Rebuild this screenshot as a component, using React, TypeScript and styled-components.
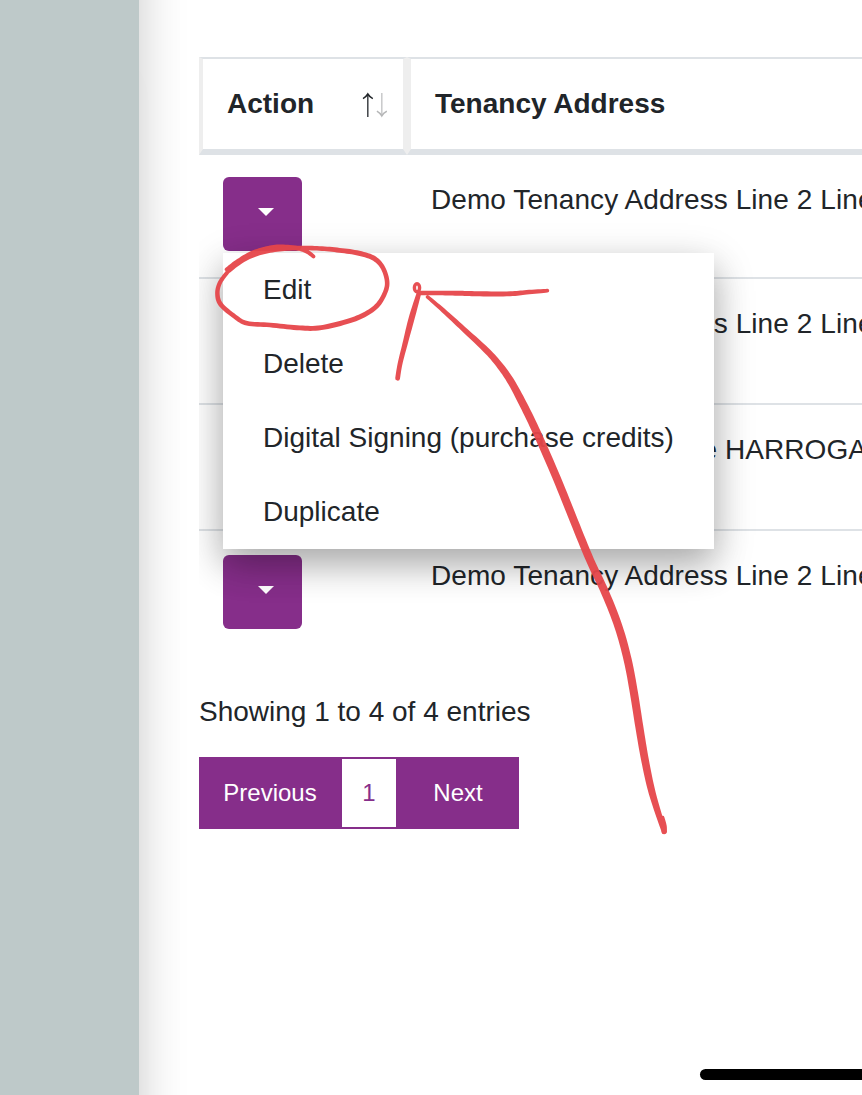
import React from 'react';
import styled, { createGlobalStyle } from 'styled-components';

const purple = '#862e8a';
const line = '#dee2e6';

const GlobalStyle = createGlobalStyle`
  * { box-sizing: border-box; }
  html, body { margin: 0; overflow: hidden; }
  body {
    background: #fff;
    color: #212529;
    font: 28px/42px "Liberation Sans", Arial, sans-serif;
  }
`;

const Page = styled.div`
  position: relative;
  display: flex;
  width: 100%;
  height: 1095px;
  overflow: hidden;
`;

const Sidebar = styled.aside`
  flex: 0 0 139px;
  background: #bec9c9;
  box-shadow: 0 -60px 48px rgba(0, 0, 0, 0.22), 0 60px 48px rgba(0, 0, 0, 0.01);
  height: 1215px;
`;

const Content = styled.main`
  flex: 1;
  min-width: 0;
  padding: 57px 0 0 60px;
`;

const TableArea = styled.section`
  position: relative;
  height: 634px;
  overflow: hidden;
`;

const HeaderRow = styled.div`
  display: grid;
  grid-template-columns: 208px 900px;
`;

const HeaderCell = styled.div`
  display: flex;
  justify-content: space-between;
  height: 98px;
  padding: 24px 16px 24px 24px;
  border: 4px solid #eee;
  border-top: 2px solid ${line};
  border-bottom: 6px solid ${line};
  font-weight: 700;
  white-space: nowrap;
`;

const SortIcon = styled.svg`
  width: 26px;
  height: 26px;
  margin-top: 9px;
`;

const Row = styled.div<{ $first?: boolean }>`
  display: grid;
  grid-template-columns: 208px 900px;
  height: ${(p) => (p.$first ? 122 : 126)}px;
  padding-top: ${(p) => (p.$first ? 22 : 24)}px;
  border-top: ${(p) => (p.$first ? 0 : 2)}px solid ${line};
`;

const ActionCell = styled.div`
  padding-left: 24px;
`;

const AddressCell = styled.div<{ $indent?: number; $first?: boolean }>`
  padding-top: ${(p) => (p.$first ? 2 : 0)}px;
  padding-left: ${(p) => 24 + (p.$indent ?? 0)}px;
  letter-spacing: 0.08px;
  white-space: nowrap;
`;

const ActionButton = styled.button`
  display: flex;
  align-items: center;
  justify-content: center;
  width: 79px;
  height: 74px;
  padding: 0 0 4px 7px;
  border: 0;
  border-radius: 6px;
  background: ${purple};
`;

const Caret = styled.span`
  border: 8px solid transparent;
  border-top-color: #fff;
  border-bottom: 0;
`;

const Menu = styled.ul`
  position: absolute;
  top: 196px;
  left: 24px;
  width: 491px;
  margin: 0;
  padding: 0;
  list-style: none;
  background: #fff;
  box-shadow: 0 16px 32px rgba(0, 0, 0, 0.2), 0 12px 40px rgba(0, 0, 0, 0.19);
`;

const MenuItem = styled.li`
  height: 74px;
  padding: 16px 40px;
  white-space: nowrap;
`;

const Summary = styled.div`
  height: 42px;
`;

const Pagination = styled.nav`
  display: flex;
  width: 320px;
  height: 72px;
  margin-top: 24px;
  border: 2px solid ${purple};
  background: ${purple};
  font-size: 24px;
`;

const PageButton = styled.button<{ $current?: boolean; $grow?: boolean }>`
  flex: ${(p) => (p.$grow ? 1 : 'none')};
  width: ${(p) => (p.$current ? 54 : 141)}px;
  padding: ${(p) => (p.$current ? '0' : p.$grow ? '0 0 0 3px' : '0 3px 0 0')};
  border: 0;
  background: ${(p) => (p.$current ? '#fff' : purple)};
  color: ${(p) => (p.$current ? purple : '#fff')};
  font: inherit;
`;

const HomeIndicator = styled.div`
  position: absolute;
  top: 1069px;
  left: 700px;
  width: 300px;
  height: 11px;
  border-radius: 6px;
  background: #000;
`;

const Ink = styled.svg`
  position: absolute;
  inset: 0;
  width: 862px;
  height: 1095px;
  fill: #e6464a;
  opacity: 0.95;
  pointer-events: none;
`;

// A pen sample: x, y and the width of the nib at that point.
type Sample = [number, number, number];

const spline = (a: number, b: number, c: number, d: number, t: number) =>
  0.5 * (2 * b + (c - a) * t + (2 * a - 5 * b + 4 * c - d) * t * t + (3 * b - a - 3 * c + d) * t * t * t);

function penPath(samples: Sample[]) {
  const pts: Sample[] = [];
  const at = (i: number) => samples[Math.max(0, Math.min(samples.length - 1, i))];
  for (let i = 0; i < samples.length - 1; i++) {
    for (let s = 0; s < 8; s++) {
      pts.push([0, 1, 2].map((k) => spline(at(i - 1)[k], at(i)[k], at(i + 1)[k], at(i + 2)[k], s / 8)) as Sample);
    }
  }
  pts.push(samples[samples.length - 1]);
  const left: string[] = [];
  const right: string[] = [];
  pts.forEach(([x, y, w], i) => {
    const p = pts[Math.max(0, i - 1)];
    const n = pts[Math.min(pts.length - 1, i + 1)];
    const len = Math.hypot(n[0] - p[0], n[1] - p[1]) || 1;
    const nx = (-(n[1] - p[1]) / len) * (w / 2);
    const ny = ((n[0] - p[0]) / len) * (w / 2);
    left.push(`${(x + nx).toFixed(2)} ${(y + ny).toFixed(2)}`);
    right.unshift(`${(x - nx).toFixed(2)} ${(y - ny).toFixed(2)}`);
  });
  const r0 = pts[0][2] / 2;
  const r1 = pts[pts.length - 1][2] / 2;
  return `M${left.join('L')}A${r1} ${r1} 0 0 0 ${right[0]}L${right.join('L')}A${r0} ${r0} 0 0 0 ${left[0]}Z`;
}

const strokes: Sample[][] = [
  [[313.5, 256.5, 3.8], [306.5, 251.3, 4.2], [296, 248, 4.4], [279, 246.8, 4.6], [265, 249, 4.6], [250, 254, 4.4], [235, 263, 4], [226.5, 269.5, 3.6]],
  [[228, 271.5, 4], [243, 260, 4.6], [259, 253, 4.8], [277, 249.4, 4.8], [297, 248, 4.6], [317, 248.3, 4.6], [337, 250, 4.8], [356.7, 252.8, 5], [373, 257.8, 5], [382.3, 266.8, 4.6], [387, 280.5, 4.6], [385.3, 292, 4.6], [376.7, 306, 4.8], [361.7, 316, 5], [343, 322.7, 5], [318.3, 328, 5], [297, 327.7, 4.9], [270, 325, 4.7], [247, 323.3, 4.5], [235, 316.7, 4.5], [220.8, 304.5, 4.7], [217.4, 293.5, 4.5], [220, 282.5, 4.2], [228, 271.5, 4]],
  [[419, 293, 4.4], [440, 293, 4.6], [460, 293.3, 5], [480, 293.8, 5.1], [510, 293.8, 4.9], [526.7, 292.2, 4.4], [547.3, 290.7, 3.8]],
  [[419, 293, 4.6], [411.7, 318, 6], [405, 344, 5.2], [400, 364, 4.8], [397.6, 378.3, 4.8]],
  [[427.5, 296.8, 3.6], [443.3, 310.5, 4.4], [463.3, 328.8, 5.2], [484, 348, 6], [497, 362, 6.6], [510, 380, 7.2], [523.3, 404.5, 7.8], [537.5, 434, 8], [556.8, 478.3, 8.1], [574, 521, 8.1], [590, 560, 8.1], [605.5, 593.3, 8.1], [618.5, 626.7, 8.1], [627.7, 660, 8.1], [634, 693.3, 8.1], [639.3, 726.7, 8], [645, 760, 7.7], [652.3, 793.3, 7], [664.2, 831.5, 5.2]],
  [[664.2, 831.5, 5.2], [664.2, 826, 5], [662.6, 817.5, 3.6]],
];

const AddressRow = ({ text, first, indent }: { text: string; first?: boolean; indent?: number }) => (
  <Row $first={first}>
    <ActionCell>
      <ActionButton aria-label="Actions">
        <Caret />
      </ActionButton>
    </ActionCell>
    <AddressCell $indent={indent} $first={first}>
      {text}
    </AddressCell>
  </Row>
);

export default function App() {
  return (
    <>
      <GlobalStyle />
      <Page>
        <Sidebar />
        <Content>
          <TableArea>
            <HeaderRow>
              <HeaderCell>
                <span>Action</span>
                <SortIcon viewBox="0 0 26 26" fill="none" strokeWidth="1.5">
                  <path d="M6.8 25V2" stroke="#3f4347" />
                  <path d="M2 6.6Q5 5 6.8 2Q8.6 5 11.8 6.6" stroke="#212529" />
                  <path d="M20.8 1v23" stroke="#c8c9ca" />
                  <path d="M15.9 19.2Q19 20.8 20.8 24Q22.6 20.8 25.8 19.2" stroke="#b5b6b7" />
                </SortIcon>
              </HeaderCell>
              <HeaderCell>Tenancy Address</HeaderCell>
            </HeaderRow>
            <AddressRow first text="Demo Tenancy Address Line 2 Line 3" />
            <AddressRow text="Demo Tenancy Address Line 2 Line 3" />
            <AddressRow text="Demo Tenancy Centre HARROGATE" indent={6.5} />
            <AddressRow text="Demo Tenancy Address Line 2 Line 3" />
            <Menu>
              <MenuItem>Edit</MenuItem>
              <MenuItem>Delete</MenuItem>
              <MenuItem>Digital Signing (purchase credits)</MenuItem>
              <MenuItem>Duplicate</MenuItem>
            </Menu>
          </TableArea>
          <Summary>Showing 1 to 4 of 4 entries</Summary>
          <Pagination>
            <PageButton>Previous</PageButton>
            <PageButton $current>1</PageButton>
            <PageButton $grow>Next</PageButton>
          </Pagination>
        </Content>
        <HomeIndicator />
        <Ink viewBox="0 0 862 1095">
          {strokes.map((s, i) => (
            <path key={i} d={penPath(s)} />
          ))}
          <ellipse cx="417" cy="287.8" rx="2.6" ry="4" fill="none" stroke="#e6464a" strokeWidth="3.4" />
        </Ink>
      </Page>
    </>
  );
}
